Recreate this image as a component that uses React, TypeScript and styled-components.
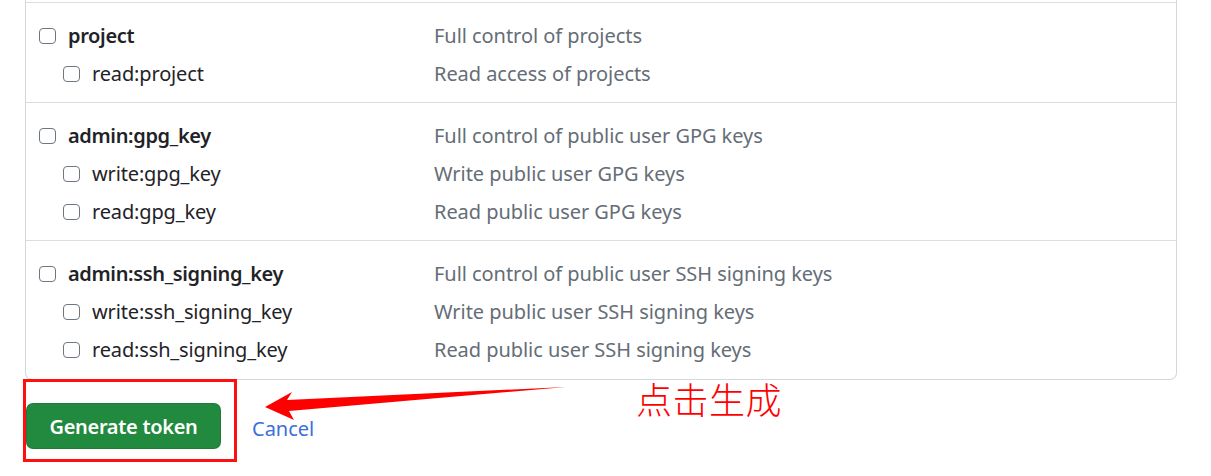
import React from "react";
import styled, { createGlobalStyle } from "styled-components";

const Global = createGlobalStyle`
  html, body { margin: 0; padding: 0; background: #ffffff; }
  body { font-family: "Segoe UI", "Noto Sans", "Liberation Sans", sans-serif; color: #1f2328; }
  * { box-sizing: border-box; }
`;

const Page = styled.div`
  position: relative;
  width: 1211px;
  height: 476px;
  overflow: hidden;
`;

const Card = styled.div`
  margin-left: 25px;
  width: 1152px;
  padding-top: 2px;
  padding-bottom: 1px;
  border: 1px solid #d0d7de;
  border-top: none;
  border-radius: 0 0 7px 7px;
`;

const Group = styled.div`
  border-top: 1px solid #d8dee4;
  padding: 13px 0 10px 13px;
`;

const Row = styled.div`
  display: flex;
  align-items: center;
  height: 38px;
  font-size: 20px;
`;

const LabelCell = styled.label<{ $sub?: boolean }>`
  display: flex;
  align-items: center;
  gap: 12px;
  width: 395px;
  padding-left: ${(p) => (p.$sub ? "24px" : "0")};
  font-weight: ${(p) => (p.$sub ? 400 : 600)};
  letter-spacing: ${(p) => (p.$sub ? "-0.15px" : "-0.35px")};
  color: #1f2328;
`;

const Box = styled.span`
  display: inline-block;
  width: 17px;
  height: 16px;
  margin-top: 2px;
  border: 1.5px solid #6e7781;
  border-radius: 4px;
  background: #fff;
  flex: none;
`;

const Desc = styled.span`
  color: #656d76;
  letter-spacing: -0.05px;
`;

const Footer = styled.div`
  display: flex;
  align-items: center;
  gap: 31px;
  margin: 23px 0 0 26px;
`;

const GreenButton = styled.button`
  width: 195px;
  height: 46px;
  border: 1px solid rgba(31, 35, 40, 0.15);
  border-radius: 7px;
  background: #218a3e;
  color: #ffffff;
  font-family: inherit;
  font-size: 20px;
  font-weight: 600;
  letter-spacing: -0.3px;
  cursor: pointer;
`;

const CancelLink = styled.a`
  color: #3b6fdc;
  font-size: 20px;
  text-decoration: none;
  margin-top: 4px;
`;

const Highlight = styled.div`
  position: absolute;
  left: 23px;
  top: 379px;
  width: 214px;
  height: 83px;
  border: 3px solid #ff1010;
  pointer-events: none;
`;

const ArrowSvg = styled.svg`
  position: absolute;
  left: 0;
  top: 0;
  pointer-events: none;
`;

const Note = styled.div`
  position: absolute;
  left: 636px;
  top: 380px;
  font-family: "Noto Sans CJK SC", sans-serif;
  font-size: 36px;
  font-weight: 300;
  line-height: 1;
  color: #ff0000;
  letter-spacing: 0.5px;
`;

type Scope = { name: string; desc: string; sub?: boolean };

const groups: Scope[][] = [
  [
    { name: "project", desc: "Full control of projects" },
    { name: "read:project", desc: "Read access of projects", sub: true },
  ],
  [
    { name: "admin:gpg_key", desc: "Full control of public user GPG keys" },
    { name: "write:gpg_key", desc: "Write public user GPG keys", sub: true },
    { name: "read:gpg_key", desc: "Read public user GPG keys", sub: true },
  ],
  [
    { name: "admin:ssh_signing_key", desc: "Full control of public user SSH signing keys" },
    { name: "write:ssh_signing_key", desc: "Write public user SSH signing keys", sub: true },
    { name: "read:ssh_signing_key", desc: "Read public user SSH signing keys", sub: true },
  ],
];

export default function App() {
  return (
    <Page>
      <Global />
      <Card>
        {groups.map((g, i) => (
          <Group key={i}>
            {g.map((s) => (
              <Row key={s.name}>
                <LabelCell $sub={s.sub}>
                  <Box />
                  {s.name}
                </LabelCell>
                <Desc>{s.desc}</Desc>
              </Row>
            ))}
          </Group>
        ))}
      </Card>
      <Footer>
        <GreenButton>Generate token</GreenButton>
        <CancelLink href="#">Cancel</CancelLink>
      </Footer>
      <Highlight />
      <ArrowSvg width="1211" height="476" viewBox="0 0 1211 476">
        <polygon
          points="265,407 292,392 287,400 566,387 289,411 294,420"
          fill="#ff0000"
        />
      </ArrowSvg>
      <Note>点击生成</Note>
    </Page>
  );
}
